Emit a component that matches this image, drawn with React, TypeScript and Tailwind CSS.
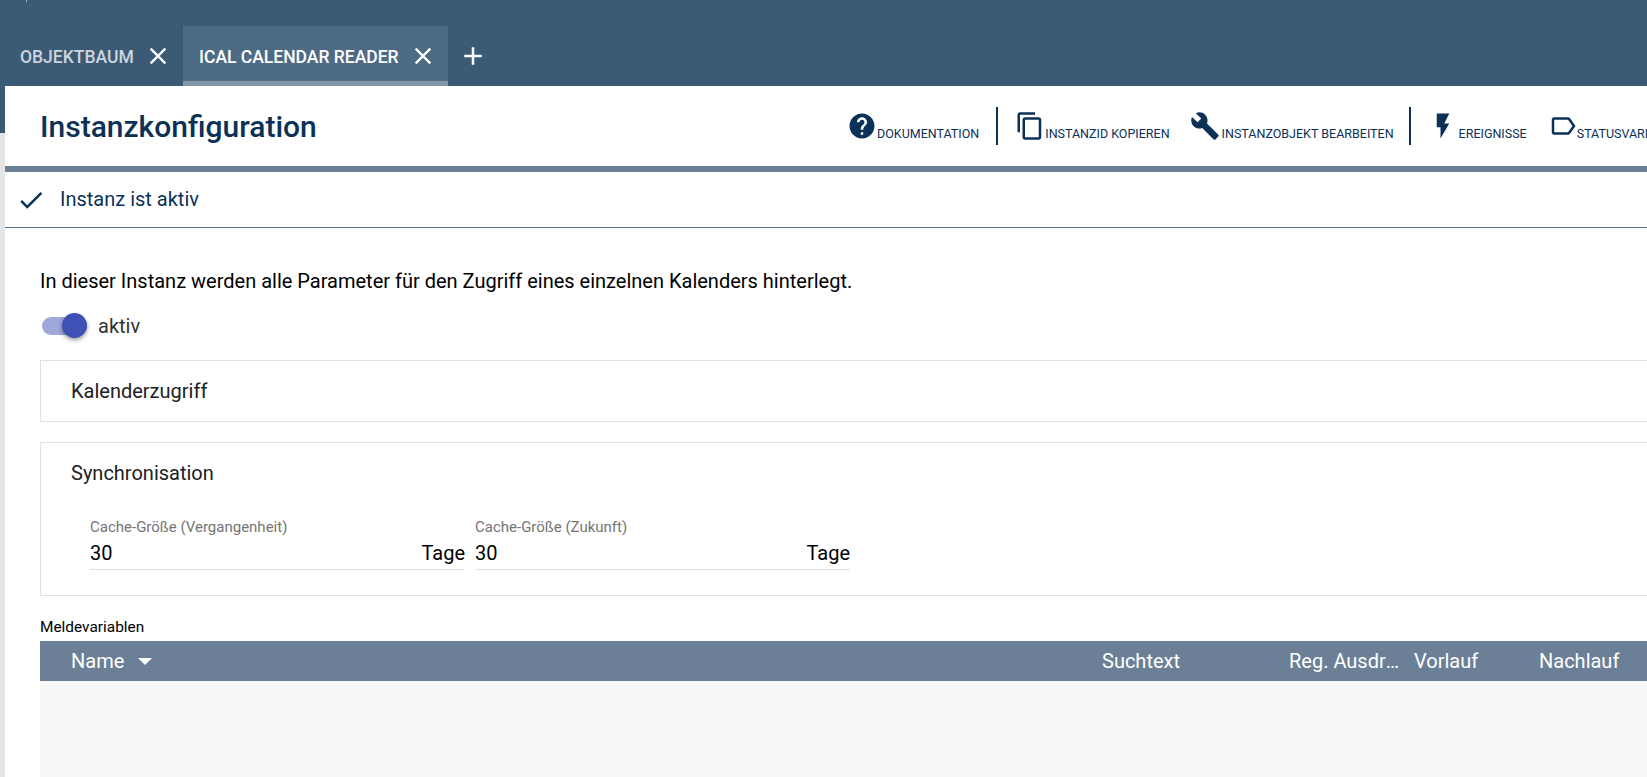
import React from 'react';

const NAVY = 'text-[#0b3157]';

function MatIcon({ d, className }: { d: string; className: string }) {
  return (
    <svg viewBox="0 0 24 24" fill="currentColor" className={className}>
      <path d={d} />
    </svg>
  );
}

const icons = {
  help: 'M12 2C6.48 2 2 6.48 2 12s4.48 10 10 10 10-4.48 10-10S17.52 2 12 2zm1 17h-2v-2h2v2zm2.07-7.75l-.9.92C13.45 12.9 13 13.5 13 15h-2v-.5c0-1.1.45-2.1 1.17-2.83l1.24-1.26c.37-.36.59-.86.59-1.41 0-1.1-.9-2-2-2s-2 .9-2 2H8c0-2.21 1.79-4 4-4s4 1.79 4 4c0 .88-.36 1.68-.93 2.25z',
  copy: 'M16 1H4c-1.1 0-2 .9-2 2v14h2V3h12V1zm3 4H8c-1.1 0-2 .9-2 2v14c0 1.1.9 2 2 2h11c1.1 0 2-.9 2-2V7c0-1.1-.9-2-2-2zm0 16H8V7h11v14z',
  build: 'M22.7 19l-9.1-9.1c.9-2.3.4-5-1.5-6.9-2-2-5-2.4-7.4-1.3L9 6 6 9 1.6 4.7C.4 7.1.9 10.1 2.9 12.1c1.9 1.9 4.6 2.4 6.9 1.5l9.1 9.1c.4.4 1 .4 1.4 0l2.3-2.3c.5-.4.5-1.1.1-1.4z',
  flash: 'M7 2v11h3v9l7-12h-4l4-8z',
  label: 'M17.63 5.84C17.27 5.33 16.67 5 16 5L5 5.01C3.9 5.01 3 5.9 3 7v10c0 1.1.9 1.99 2 1.99L16 19c.67 0 1.27-.33 1.63-.84L22 12l-4.37-6.16zM16 17H5V7h11l3.55 5L16 17z',
  close: 'M19 6.41L17.59 5 12 10.59 6.41 5 5 6.41 10.59 12 5 17.59 6.41 19 12 13.41 17.59 19 19 17.59 13.41 12z',
  plus: 'M19 13h-6v6h-2v-6H5v-2h6V5h2v6h6v2z',
  check: 'M9 16.17L4.83 12l-1.42 1.41L9 19 21 7l-1.41-1.41z',
};

function Action({ icon, label, iconClass, className }: { icon: string; label: string; iconClass: string; className: string }) {
  return (
    <div className={`flex items-center shrink-0 ${className}`}>
      <MatIcon d={icon} className={`shrink-0 ${iconClass}`} />
      <span className="text-[12.5px] leading-none mt-[13px] whitespace-nowrap">{label}</span>
    </div>
  );
}

function Field({ label, value }: { label: string; value: string }) {
  return (
    <div className="w-[375px] border-b border-[#e0e0e0] h-[54px]">
      <div className="text-[15px] leading-[16px] pt-[3px] text-[#757575] box-content">{label}</div>
      <div className="flex justify-between text-[20px] leading-[24px] mt-[6px] text-black">
        <span>{value}</span>
        <span>Tage</span>
      </div>
    </div>
  );
}

export default function App() {
  return (
    <div className="w-[1647px] h-[777px] overflow-hidden flex flex-col bg-white font-['Roboto',sans-serif]">
      {/* tabs */}
      <div className="relative h-[86px] shrink-0 bg-[#3b5a76] flex items-end text-white">
        <div className="absolute left-[26px] top-0 w-px h-[2px] bg-[#8fb0cc]" />
        <div className="w-[183px] h-[60px] flex items-center pl-[20px]">
          <span className="w-[128px] mt-[2px] text-[17.5px] font-medium text-white/75 whitespace-nowrap">OBJEKTBAUM</span>
          <MatIcon d={icons.close} className="w-[28px] h-[28px] -ml-[4px]" />
        </div>
        <div className="w-[265px] h-[60px] flex items-center pl-[16px] pt-[5px] bg-[#4e6b85] border-b-[5px] border-[#8296a8]">
          <span className="w-[214px] mt-[2px] text-[17.5px] font-medium whitespace-nowrap">ICAL CALENDAR READER</span>
          <MatIcon d={icons.close} className="w-[28px] h-[28px] -ml-[4px]" />
        </div>
        <div className="h-[60px] flex items-center pl-[10px]">
          <MatIcon d={icons.plus} className="w-[30px] h-[30px]" />
        </div>
      </div>

      <div className="flex-1 flex min-h-0">
        {/* left edge */}
        <div className="w-[5px] shrink-0 bg-[#e5e5e5]">
          <div className="h-[47px] bg-[#3b5a76]" />
        </div>

        <div className="flex-1 min-w-0 overflow-hidden flex flex-col">
          {/* header */}
          <div className={`h-[80px] shrink-0 flex items-center pl-[35px] ${NAVY}`}>
            <h1 className="w-[807px] shrink-0 text-[30px] font-medium leading-none mt-[2px]">Instanzkonfiguration</h1>
            <div className="flex items-center h-[38px] mt-[3px]">
              <Action icon={icons.help} label="DOKUMENTATION" iconClass="w-[30px] h-[30px] -mt-[4px]" className="" />
              <div className="w-[2px] h-[38px] -mt-[3px] bg-[#0b3157] ml-[17px] mr-[17px] shrink-0" />
              <Action icon={icons.copy} label="INSTANZID KOPIEREN" iconClass="w-[30px] h-[30px] -mt-[4px]" className="" />
              <Action icon={icons.build} label="INSTANZOBJEKT BEARBEITEN" iconClass="w-[30px] h-[30px] -mt-[4px] mr-[2px]" className="ml-[20px]" />
              <div className="w-[2px] h-[38px] -mt-[3px] bg-[#0b3157] ml-[15px] mr-[17px] shrink-0" />
              <Action icon={icons.flash} label="EREIGNISSE" iconClass="w-[30px] h-[30px] -mt-[4px] mr-[1px]" className="" />
              <Action icon={icons.label} label="STATUSVARIABLEN" iconClass="w-[30px] h-[30px] -mt-[4px] -mr-[1px]" className="ml-[21px]" />
            </div>
          </div>
          <div className="h-[6px] shrink-0 bg-[#6b8096]" />

          {/* status */}
          <div className={`h-[56px] shrink-0 flex items-center pl-[11px] border-b border-[#5a7590] ${NAVY}`}>
            <MatIcon d={icons.check} className="w-[30px] h-[30px] mt-[1px]" />
            <span className="ml-[14px] text-[20px] -mt-[1px]">Instanz ist aktiv</span>
          </div>

          {/* content */}
          <div className="flex-1 min-h-0 flex flex-col pl-[35px] -mr-[40px]">
            <p className="mt-[41px] text-[20px] leading-[24px] text-black">
              In dieser Instanz werden alle Parameter für den Zugriff eines einzelnen Kalenders hinterlegt.
            </p>
            <div className="mt-[20px] h-[26px] flex items-center">
              <div className="relative w-[45px] h-[18px] ml-[2px] rounded-full bg-[#9fa8da]">
                <div className="absolute right-0 -top-[4px] w-[25px] h-[25px] rounded-full bg-[#3f51b5] shadow-[0_2px_4px_rgba(0,0,0,0.4)]" />
              </div>
              <span className="ml-[11px] text-[20px] text-[#333]">aktiv</span>
            </div>

            <div className="mt-[21px] h-[62px] shrink-0 border border-[#e0e0e0] flex items-center pl-[30px] text-[20px] text-[#212121]">
              Kalenderzugriff
            </div>

            <div className="mt-[20px] h-[154px] shrink-0 border border-[#e0e0e0] pl-[30px] text-[#212121]">
              <div className="text-[20px] leading-[24px] mt-[18px]">Synchronisation</div>
              <div className="flex gap-[10px] ml-[19px] mt-[31px]">
                <Field label="Cache-Größe (Vergangenheit)" value="30" />
                <Field label="Cache-Größe (Zukunft)" value="30" />
              </div>
            </div>

            <div className="mt-[23px] text-[15.4px] leading-[16px] text-black">Meldevariablen</div>
            <div className="mt-[6px] flex-1 min-h-0 flex flex-col bg-[#f7f7f7]">
              <div className="h-[40px] shrink-0 bg-[#6b8096] flex items-center text-white text-[20px]">
                <div className="w-[1062px] shrink-0 pl-[31px] flex items-center">
                  Name
                  <svg viewBox="0 0 14 7" className="w-[14px] h-[7px] ml-[14px]" fill="currentColor"><path d="M0 0h14L7 7z" /></svg>
                </div>
                <div className="w-[187px] shrink-0">Suchtext</div>
                <div className="w-[125px] shrink-0 pr-[7px] truncate">Reg. Ausdruck</div>
                <div className="w-[125px] shrink-0">Vorlauf</div>
                <div className="w-[125px] shrink-0">Nachlauf</div>
              </div>
            </div>
          </div>
        </div>
      </div>
    </div>
  );
}
